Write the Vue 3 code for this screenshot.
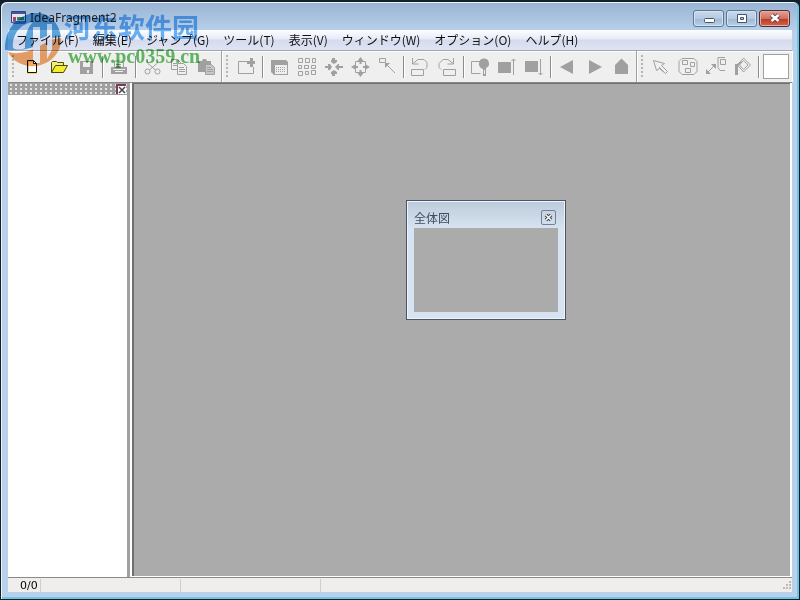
<script setup>
const menus = ['ファイル(F)', '編集(E)', 'ジャンプ(G)', 'ツール(T)', '表示(V)', 'ウィンドウ(W)', 'オプション(O)', 'ヘルプ(H)']

const g = '#a0a0a0'
const line = (d) => ({ d, stroke: g, fill: 'none' })
const solid = (d, fill = g) => ({ d, fill, stroke: 'none' })

const mainGroups = [
  [
    { label: 'New', paths: [{ d: 'M8.500 5.500h6l3 3v9h-9z', fill: '#fff', stroke: '#111' }, { d: 'M14.500 5.500v3h3', fill: 'none', stroke: '#111' }, { d: 'M8 18.500h10', fill: 'none', stroke: '#f0d850' }, { d: 'M9.500 16.500v-10h4', fill: 'none', stroke: '#f4cf60' }] },
    { label: 'Open', paths: [{ d: 'M5.500 17.500v-10l1-1h4l1 1h6v3', fill: '#f5ee70', stroke: '#4a4a10' }, { d: 'M5.500 17.500l4-7h12l-4 7z', fill: '#f5ee30', stroke: '#4a4a10' }] },
    { label: 'Save', paths: [{ d: 'M7 6h13v13H7zM10 7v5h7V7zM14 15v3h2v-3z', fill: g, 'fill-rule': 'evenodd' }] },
  ],
  [
    { label: 'Print', paths: [solid('M5 12h16v7H5z'), line('M8.500 13v-7h7l2 2v5M10 9.500h5M10 11.500h5'), solid('M7 14h12v1H7zM9 16h8v1H9z', '#efefef')] },
  ],
  [
    { label: 'Cut', paths: [line('M8.500 4v4l8 7M18.500 4v4l-8 7'), { d: 'M6 16.500a2.500 2.500 0 1 0 5 0a2.500 2.500 0 1 0-5 0M16 16.500a2.500 2.500 0 1 0 5 0a2.500 2.500 0 1 0-5 0', fill: 'none', stroke: g }] },
    { label: 'Copy', paths: [line('M5.500 4.500h6l3 3v7h-9zM7 8.500h5M7 10.500h5'), { d: 'M11.500 8.500h6l3 3v8h-9z', fill: '#efefef', stroke: g }, line('M13 12.500h5M13 14.500h6M13 16.500h6')] },
    { label: 'Paste', paths: [solid('M5 6h4l1-2h3l1 2h4v11H5z'), { d: 'M12.500 9.500h6l3 3v7h-9z', fill: '#c6c6c6', stroke: g }, line('M14 12.500h4M14 14.500h6M14 16.500h6')] },
  ],
]

const editGroups = [
  [
    { label: 'Add fragment', paths: [line('M15 6.500H5.500v12h15V12'), solid('M14 6h3V3h3v3h2v3h-2v3h-3V9h-3z')] },
  ],
  [
    { label: 'Window list', paths: [solid('M5 5h15l2 2v13H8l-3-3z'), solid('M9 10h12v9H9z', '#efefef'), { d: 'M10 12.500h10M10 14.500h10M10 16.500h10', stroke: g, fill: 'none', 'stroke-dasharray': '1 1' }] },
    { label: 'Tile', paths: [line('M5.500 3.500h4v4h-4zM12.500 3.500h4v4h-4zM19.500 3.500h3v4h-3zM5.500 10.500h3v3h-3zM11.500 10.500h4v3h-4zM18.500 10.500h4v3h-4zM5.500 16.500h4v4h-4zM12.500 16.500h3v3h-3zM18.500 15.500h4v4h-4z')] },
    { label: 'Gather', paths: [solid('M12 3h3v2h2v2l-3 2-3-2V5h1zM12 21h3v-2h2v-2l-3-2-3 2v2h1zM5 11h3V9h2l2 3-2 3H8v-2H5zM23 11h-4V9h-1l-3 3 3 3h1v-2h4z')] },
    { label: 'Spread', paths: [line('M8.500 6.500h10v11h-10z'), solid('M13.500 2l3 4h-2v3h-2V6h-2zM13.500 22l3-4h-2v-3h-2v3h-2zM4 12l5-3v2h2v2H9v2zM23 12l-5-3v2h-2v2h2v2z')] },
    { label: 'Link', paths: [line('M5.500 3.500h6v4h-6zM12.500 9.500L21 18'), solid('M11 8h5l-5 5z')] },
  ],
  [
    { label: 'Undo', paths: [line('M4.500 14.500h12v6h-12zM6 8.500l5-4h6l3 3v5l-2 2M5.500 3v6h6')] },
    { label: 'Redo', paths: [line('M9.500 14.500h12v6h-12zM19 8.500l-5-4H9l-4 4v4l2 2M19.500 3v6h-6')] },
  ],
  [
    { label: 'Lock', paths: [line('M13 6.500H4.500v12h9'), solid('M12 8a5 5 0 1 1 7 5v8h-3v-7a5 5 0 0 1-4-6z'), solid('M17 15h1v4h-1z', '#efefef')] },
    { label: 'Move up', paths: [solid('M4 7h13v11H4z'), line('M19.500 20V4M17.500 6l2-2 2 2')] },
    { label: 'Move down', paths: [solid('M4 6h13v11H4z'), line('M19.500 4v16M17.500 18l2 2 2-2')] },
  ],
  [
    { label: 'Back', paths: [solid('M6 12L19 5v14z')] },
    { label: 'Forward', paths: [solid('M21 12L8 5v14z')] },
    { label: 'Home', paths: [solid('M13.500 3.500L20 10v9H7v-9z')] },
  ],
]

const toolGroup = [
  { label: 'Select', paths: [line('M5.500 5.500l3 10 3-2 6 5 2-2-6-6 3-2zM11 12l5 5')] },
  { label: 'Group', paths: [line('M7 3.500h12l3 3v10l-3 3H7l-3-3v-10zM7.500 5.500h5v4h-5zM15.500 7.500h4v4h-4zM10.500 13.500h5v4h-5z')] },
  { label: 'Connect', paths: [line('M5 18L13 10M23 2.500h-7v10l2 3h5M18.500 4.500h5v5h-5z'), solid('M4 19v-5l5 5zM14 9v5l-5-5z')] },
  { label: 'Fill', paths: [line('M14.500 3l7 7-7 7-6-7zM14.500 5.500l4.500 4.500-4.500 4.500-4-4.500z'), solid('M6 9h2l4-3 1 1-4 4v9H6z')] },
]
</script>

<template>
  <main class="window">
    <header class="titlebar">
      <svg class="app-icon" viewBox="0 0 15 14" aria-hidden="true">
        <path d="M.5 .5h14v11H.5z" fill="#e7e4ef" stroke="#344377" />
        <path d="M1 1h13v2H1z" fill="#42569c" />
        <path d="M2 6h3v4H2z" fill="#a34768" /><path d="M6 6h7v3H6z" fill="#328b58" />
        <path d="M2 10h12v3H2z" fill="#5874b0" />
      </svg>
      <h1>IdeaFragment2</h1>
      <div class="controls">
        <button class="control" type="button" aria-label="Minimize">
          <svg viewBox="0 0 14 12"><rect x="2.500" y="6.500" width="10" height="4" rx="1" fill="#fff" stroke="#46546a" /></svg>
        </button>
        <button class="control" type="button" aria-label="Maximize">
          <svg viewBox="0 0 14 12"><path d="M2.500 2.500h9v8h-9zM5.500 5.500h3v2h-3z" fill="#fff" fill-rule="evenodd" stroke="#46546a" /></svg>
        </button>
        <button class="control close" type="button" aria-label="Close">
          <svg viewBox="0 0 14 12"><path d="M3.500 3l7 6M10.500 3l-7 6" stroke="#66424c" stroke-width="4.500" /><path d="M3.500 3l7 6M10.500 3l-7 6" stroke="#fff" stroke-width="2.500" /></svg>
        </button>
      </div>
    </header>

    <div class="client">
      <nav class="menubar">
        <button v-for="m in menus" :key="m" type="button">{{ m }}</button>
      </nav>

      <div class="toolbars">
        <section class="band">
          <i class="grip"></i>
          <template v-for="(group, n) in mainGroups" :key="n">
            <i v-if="n" class="sep"></i>
            <button v-for="t in group" :key="t.label" class="tool" type="button" :aria-label="t.label">
              <svg viewBox="0 0 27 24"><path v-for="(p, k) in t.paths" :key="k" v-bind="p" /></svg>
            </button>
          </template>
        </section>
        <section class="band">
          <i class="grip"></i>
          <template v-for="(group, n) in editGroups" :key="n">
            <i v-if="n" class="sep"></i>
            <button v-for="t in group" :key="t.label" class="tool" type="button" :aria-label="t.label">
              <svg viewBox="0 0 27 24"><path v-for="(p, k) in t.paths" :key="k" v-bind="p" /></svg>
            </button>
          </template>
        </section>
        <section class="band last">
          <i class="grip"></i>
          <button v-for="t in toolGroup" :key="t.label" class="tool" type="button" :aria-label="t.label">
            <svg viewBox="0 0 27 24"><path v-for="(p, k) in t.paths" :key="k" v-bind="p" /></svg>
          </button>
          <i class="sep"></i>
          <button class="swatch" type="button" aria-label="Color"></button>
        </section>
      </div>

      <div class="workspace">
        <aside class="panel">
          <div class="panel-head">
            <button type="button" aria-label="Close panel">
              <svg viewBox="0 0 10 10"><path d="M0 0h10v10H0z" fill="#fff" /><path d="M0 0h10v2H2v8H0z" fill="#743d5c" /><path d="M3 3l6 6M9 3L3 9" stroke="#444" stroke-width="1.500" /></svg>
            </button>
          </div>
          <div class="panel-body"></div>
        </aside>
        <section class="canvas">
          <div class="overview">
            <div class="overview-head">
              <h2>全体図</h2>
              <button type="button" aria-label="Close overview">
                <svg viewBox="0 0 9 9"><path d="M2 2l5 5M7 2L2 7" stroke="#3c4652" stroke-width="3.500" /><path d="M2 2l5 5M7 2L2 7" stroke="#fff" stroke-width="1.500" /></svg>
              </button>
            </div>
            <div class="overview-body"></div>
          </div>
        </section>
      </div>

      <footer class="status">
        <span class="cell count">0/0</span>
        <span class="cell wide"></span>
        <span class="cell wide"></span>
        <svg class="resize" viewBox="0 0 9 9" aria-hidden="true"><path d="M6 0h2v2H6zM3 3h2v2H3zM6 3h2v2H6zM0 6h2v2H0zM3 6h2v2H3zM6 6h2v2H6z" fill="#bcb8b4" /></svg>
      </footer>
    </div>

    <div class="watermark">
      <svg viewBox="0 0 60 60" aria-hidden="true">
        <path d="M1 40C0 20 14 3 33 3C46 3 55 13 57 27C48 27 40 32 34 35C22 41 10 40 1 40z" fill="#3795d5" />
        <path d="M4 42C14 45 24 42 34 37C42 32 49 28 57 28C58 42 47 54 32 56C20 57 9 52 4 42z" fill="#ed9048" />
        <path d="M9 38C8 24 16 14 29 12C22 19 21 28 21 38C17 40 12 40 9 38z" fill="#f2f6fb" />
        <path d="M29 17h7v12l7-3V14h5v26l-5 9V32l-7 3v18h-7z" fill="#f5f7fb" />
      </svg>
      <div class="mark-text">
        <span class="site">河东软件园</span>
        <span class="url">www.pc0359.cn</span>
      </div>
    </div>
  </main>
</template>

<style>
body {
  margin: 0;
  background: #10202c;
}
</style>

<style scoped>
* {
  box-sizing: border-box;
}
button {
  padding: 0;
  border: 0;
  background: none;
  font: inherit;
  color: inherit;
}
svg {
  display: block;
}
.window {
  position: relative;
  display: flex;
  flex-direction: column;
  min-height: 100vh;
  padding: 1px 7px 7px;
  border: 1px solid #14202c;
  border-top-width: 2px;
  border-radius: 7px 7px 0 0;
  background: linear-gradient(#98b4d3, #b9d1ea 30px, #b9d1ea);
  box-shadow: inset 1px 1px #e9f4fb, inset -2px -2px #6cc7e2;
  font-family: "Noto Sans CJK JP", sans-serif;
  font-size: 12px;
  color: #111;
}
.titlebar {
  display: flex;
  align-items: center;
  height: 27px;
  padding: 3px 2px 0 3px;
  gap: 4px;
}
.app-icon {
  width: 15px;
  height: 14px;
}
h1 {
  flex: 1;
  margin: 0;
  font: 12px/18px "Noto Sans", sans-serif;
  color: #222;
}
.controls {
  display: flex;
  gap: 2px;
}
.control {
  display: grid;
  place-items: center;
  width: 31px;
  height: 17px;
  border: 1px solid #5f7692;
  border-radius: 3px;
  background: linear-gradient(#c9daec, #b4cae1 50%, #9cb7d5 51%, #b9d1e8);
  box-shadow: inset 0 0 0 1px #d5e3f1;
}
.control svg {
  width: 14px;
  height: 12px;
}
.close {
  border-color: #5a2a30;
  background: linear-gradient(#e3a294, #d0705c 50%, #b83a22 51%, #d0664a);
  box-shadow: inset 0 0 0 1px #e5aea0;
}
.client {
  display: flex;
  flex: 1;
  flex-direction: column;
  background: #f0eeec;
}
.menubar {
  display: flex;
  align-items: center;
  gap: 14px;
  height: 20px;
  padding: 0 8px 2px;
  background: linear-gradient(#fdfdff, #e7ebf6 45%, #d5dbee 50%, #dfe4f4);
  white-space: nowrap;
}
.toolbars {
  display: flex;
  height: 33px;
  border-top: 1px solid #a4a4a8;
  border-bottom: 1px solid #8a8a8a;
  background: #efefef;
  box-shadow: inset 0 1px #fff;
}
.band {
  display: flex;
  align-items: center;
  height: 31px;
  padding-right: 1px;
  border-right: 1px solid #a0a0a0;
  box-shadow: 1px 0 #fff;
}
.band.last {
  flex: 1;
  border-right: 0;
}
.grip {
  width: 2px;
  height: 24px;
  margin: 0 5px 0 4px;
  background: repeating-linear-gradient(#b4b4b4 0 2px, transparent 2px 4px);
}
.sep {
  width: 2px;
  height: 22px;
  margin: 0 2px;
  border-left: 1px solid #8c8c8c;
  background: #fff;
}
.tool svg {
  width: 27px;
  height: 24px;
}
.swatch {
  width: 26px;
  height: 25px;
  margin-left: 1px;
  border: 1px solid #a0a0a0;
  background: #fff;
}
.workspace {
  display: flex;
  flex: 1;
  background: #fff;
}
.panel {
  display: flex;
  flex-direction: column;
  width: 122px;
  border-right: 3px solid #a0a0a0;
}
.panel-head {
  display: flex;
  justify-content: flex-end;
  align-items: center;
  height: 12px;
  padding-right: 1px;
  background: #a0a0a0 conic-gradient(from 0deg at 2px 2px, #a0a0a0 0 75%, #e4e4e4 0) 2px 1px / 5px 4px;
}
.panel-head svg {
  width: 10px;
  height: 10px;
}
.panel-body {
  flex: 1;
}
.canvas {
  position: relative;
  flex: 1;
  margin: 0 2px 1px;
  border-left: 2px solid #6f6f6f;
  border-top: 1px solid #6f6f6f;
  background: #ababab;
}
.overview {
  position: absolute;
  left: 272px;
  top: 116px;
  width: 160px;
  height: 120px;
  display: flex;
  flex-direction: column;
  padding: 6px 7px 7px;
  border: 1px solid #4b5662;
  background: linear-gradient(#bccbdb, #d7e3f0 28px);
  box-shadow: inset 0 0 0 1px #edf4fb;
}
.overview-head {
  display: flex;
  align-items: center;
  justify-content: space-between;
  height: 21px;
  padding-right: 2px;
}
h2 {
  margin: 0;
  font-size: 12px;
  font-weight: 400;
  line-height: 18px;
  color: #3f4d5c;
}
.overview-head button {
  display: grid;
  place-items: center;
  width: 15px;
  height: 15px;
  border: 1px solid #71829a;
  border-radius: 2px;
}
.overview-head svg {
  width: 9px;
  height: 9px;
}
.overview-body {
  flex: 1;
  background: #ababab;
}
.status {
  display: flex;
  align-items: center;
  height: 15px;
  border-top: 1px solid #8a8a8a;
  font: 11px/14px "DejaVu Sans", sans-serif;
  color: #000;
}
.cell {
  height: 13px;
  border-right: 1px solid #d0cdca;
  line-height: 13px;
}
.count {
  width: 33px;
  padding-left: 12px;
}
.wide {
  width: 140px;
}
.resize {
  width: 9px;
  height: 9px;
  margin-left: auto;
}
.watermark {
  position: absolute;
  left: 3px;
  top: 8px;
  display: flex;
  pointer-events: none;
  mix-blend-mode: multiply;
}
.watermark svg {
  width: 60px;
  height: 60px;
  opacity: 0.8;
}
.mark-text {
  display: flex;
  flex-direction: column;
}
.site {
  font: 700 27px/34px "Noto Sans CJK SC", sans-serif;
  color: #3b9cf0;
  opacity: 0.75;
}
.url {
  padding-left: 4px;
  font: 700 20px/24px "Liberation Serif", serif;
  color: #4cb44c;
  opacity: 0.85;
}
</style>
